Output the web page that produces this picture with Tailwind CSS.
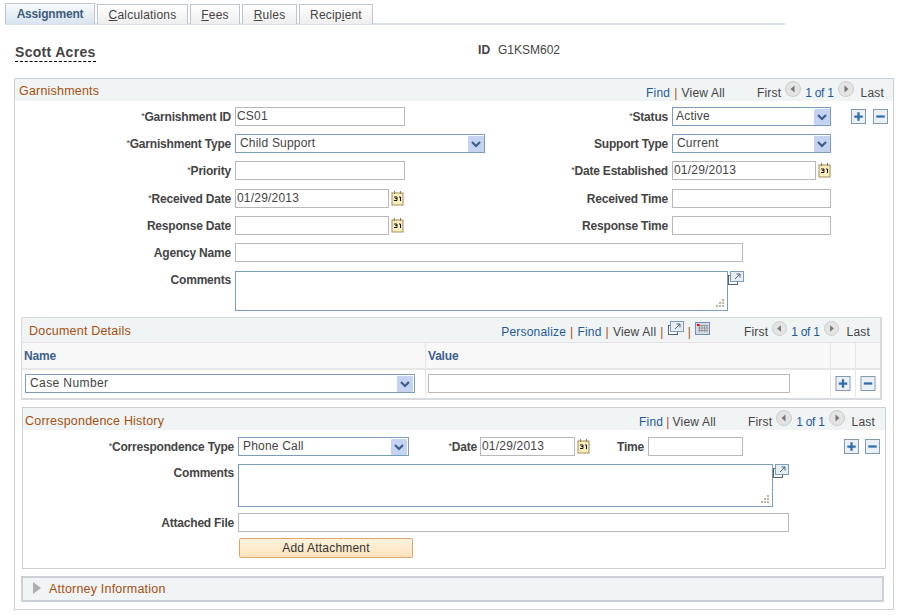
<!DOCTYPE html>
<html lang="en">
<head>
  <meta charset="UTF-8" />
  <title>Assignment</title>
  <script src="https://cdn.jsdelivr.net/npm/@tailwindcss/browser@4"></script>
</head>
<body class="bg-white w-[898px] h-[615px] overflow-hidden font-['Liberation_Sans',Arial,sans-serif] text-[12px] leading-[14px] text-[#444] tracking-[0.2px]">

  <!-- Icon sprites -->
  <svg class="hidden">
    <symbol id="arrow" viewBox="0 0 16 16">
      <rect width="16" height="16" rx="1" fill="#c5d3f2"/>
      <path d="M4 6l4 4 4-4" fill="none" stroke="#3f5c8a" stroke-width="2.2"/>
    </symbol>
    <symbol id="cal" viewBox="0 0 13 15">
      <rect x="1" y="2" width="11" height="12" fill="#fbeebc" stroke="#a48d5c"/>
      <path d="M3.5 0v3M9.5 0v3" stroke="#8d7a50"/>
      <path d="M3 6h3v1.500H4.500h1.500v2H3M8 6h1.500v4" fill="none" stroke="#111" stroke-width="1"/>
    </symbol>
    <symbol id="prev" viewBox="0 0 16 16">
      <circle cx="8" cy="8" r="7.500" fill="#e4e4e4" stroke="#ccc"/>
      <path d="M9.500 4.500v7L5.500 8z" fill="#777"/>
    </symbol>
    <symbol id="next" viewBox="0 0 16 16">
      <circle cx="8" cy="8" r="7.500" fill="#e4e4e4" stroke="#ccc"/>
      <path d="M6.500 4.500v7l4-3.500z" fill="#777"/>
    </symbol>
    <symbol id="plus" viewBox="0 0 16 16">
      <rect x=".5" y=".5" width="15" height="15" fill="#eaf0f5" stroke="#7d95a8"/>
      <path d="M8 3.500v9M3.500 8h9" stroke="#2f6db0" stroke-width="2.400"/>
    </symbol>
    <symbol id="minus" viewBox="0 0 16 16">
      <rect x=".5" y=".5" width="15" height="15" fill="#eaf0f5" stroke="#7d95a8"/>
      <path d="M3.500 8h9" stroke="#2f6db0" stroke-width="2.400"/>
    </symbol>
    <symbol id="popup" viewBox="0 0 16 14">
      <rect x=".5" y="4.500" width="9" height="9" fill="#fff" stroke="#55606c"/>
      <rect x="2.500" y=".5" width="13" height="10" fill="#e6eef5" stroke="#7d9cc0"/>
      <path d="M7 8l5-5M8.500 3H12v3.500" fill="none" stroke="#55606c"/>
    </symbol>
    <symbol id="grip" viewBox="0 0 10 10">
      <path d="M7 1h2v2H7zM4 4h2v2H4zM7 4h2v2H7zM1 7h2v2H1zM4 7h2v2H4zM7 7h2v2H7z" fill="#bcb49c"/>
    </symbol>
  </svg>

  <!-- Tabs -->
  <div class="ml-[5px] mt-[3px] w-[780px] h-[22px] flex gap-[2px] border-b-[2px] border-[#d6e2f0] items-start">
    <div class="w-[90px] h-[21px] border border-b-0 border-[#bcc4cc] bg-gradient-to-b from-[#f8fafc] to-[#d8e4f1] flex items-center justify-center font-bold tracking-[-0.2px] text-[#3f5c7e]">Assignment</div>
    <div class="w-[91px] h-[20px] mt-[1px] border border-b-0 border-[#bcc4cc] bg-gradient-to-b from-white to-[#eee] flex items-center justify-center"><span><u>C</u>alculations</span></div>
    <div class="w-[50px] h-[20px] mt-[1px] border border-b-0 border-[#bcc4cc] bg-gradient-to-b from-white to-[#eee] flex items-center justify-center"><span><u>F</u>ees</span></div>
    <div class="w-[55px] h-[20px] mt-[1px] border border-b-0 border-[#bcc4cc] bg-gradient-to-b from-white to-[#eee] flex items-center justify-center"><span><u>R</u>ules</span></div>
    <div class="w-[74px] h-[20px] mt-[1px] border border-b-0 border-[#bcc4cc] bg-gradient-to-b from-white to-[#eee] flex items-center justify-center"><span>Recip<u>i</u>ent</span></div>
  </div>

  <!-- Employee header -->
  <div class="flex h-[36px] pt-[18px] ml-[15px]">
    <div class="w-[463px]"><span class="inline-block mt-[1px] text-[14px] leading-[16px] font-bold tracking-[0.3px] text-[#444] border-b border-dashed border-black pb-[1px]">Scott Acres</span></div>
    <div class="font-bold w-[20px]">ID</div>
    <div class="tracking-[0px]">G1KSM602</div>
  </div>

  <!-- Garnishments -->
  <div class="ml-[14px] mt-[17px] w-[880px] h-[532px] border border-[#cbd0d6]">
    <div class="h-[22px] bg-[#f0f4f5] flex items-center pl-[4px]">
      <span class="mt-[2px] text-[12.5px] text-[#a8500f]">Garnishments</span>
      <div class="ml-auto mt-[6px] flex items-center mr-[9px]">
        <span class="text-[#1f5a96]">Find</span><span class="mx-[4px] text-[#a8500f]">|</span><span>View All</span>
        <span class="ml-[32px]">First</span>
        <svg class="w-[16px] h-[16px] ml-[4px] -mt-[8px]"><use href="#prev"/></svg>
        <span class="ml-[4px] text-[#1f5a96] tracking-[-0.3px]">1 of 1</span>
        <svg class="w-[16px] h-[16px] ml-[4px] -mt-[8px]"><use href="#next"/></svg>
        <span class="ml-[7px]">Last</span>
      </div>
    </div>

    <div class="pt-[2px]">
      <!-- Row: ID / status -->
      <div class="flex items-center h-[27px]">
        <div class="w-[216px] text-right font-bold tracking-[-0.2px] whitespace-nowrap"><span class="text-[9px] font-normal align-[2px]">*</span>Garnishment ID</div>
        <div class="ml-[4px] w-[170px] h-[19px] border border-[#b8b8b8] px-[1px] leading-[17px]">CS01</div>
        <div class="ml-[94px] w-[169px] text-right font-bold tracking-[-0.2px]"><span class="text-[9px] font-normal align-[2px]">*</span>Status</div>
        <div class="ml-[4px] w-[159px] h-[19px] border border-[#7c9cbc] px-[3px] leading-[17px] flex justify-between items-center">Active<svg class="w-[16px] h-[16px] -mr-[3px]"><use href="#arrow"/></svg></div>
        <svg class="w-[15px] h-[15px] ml-[20px]"><use href="#plus"/></svg>
        <svg class="w-[15px] h-[15px] ml-[7px]"><use href="#minus"/></svg>
      </div>
      <!-- Row: type / support -->
      <div class="flex items-center h-[27px]">
        <div class="w-[216px] text-right font-bold tracking-[-0.2px] whitespace-nowrap"><span class="text-[9px] font-normal align-[2px]">*</span>Garnishment Type</div>
        <div class="ml-[4px] w-[250px] h-[19px] border border-[#7c9cbc] px-[4px] leading-[17px] flex justify-between items-center">Child Support<svg class="w-[16px] h-[16px] -mr-[4px]"><use href="#arrow"/></svg></div>
        <div class="ml-[14px] w-[169px] text-right font-bold tracking-[-0.2px]">Support Type</div>
        <div class="ml-[4px] w-[159px] h-[19px] border border-[#7c9cbc] px-[4px] leading-[17px] flex justify-between items-center">Current<svg class="w-[16px] h-[16px] -mr-[4px]"><use href="#arrow"/></svg></div>
      </div>
      <!-- Row: priority / date established -->
      <div class="flex items-center h-[27px]">
        <div class="w-[216px] text-right font-bold tracking-[-0.2px]"><span class="text-[9px] font-normal align-[2px]">*</span>Priority</div>
        <div class="ml-[4px] w-[170px] h-[19px] border border-[#b8b8b8]"></div>
        <div class="ml-[94px] w-[169px] text-right font-bold tracking-[-0.2px] whitespace-nowrap"><span class="text-[9px] font-normal align-[2px]">*</span>Date Established</div>
        <div class="ml-[4px] w-[144px] h-[19px] border border-[#b8b8b8] px-[1px] leading-[17px]">01/29/2013</div>
        <svg class="w-[13px] h-[15px] ml-[2px]"><use href="#cal"/></svg>
      </div>
      <!-- Row: received -->
      <div class="flex items-center h-[28px] pt-[1px]">
        <div class="w-[216px] text-right font-bold tracking-[-0.2px]"><span class="text-[9px] font-normal align-[2px]">*</span>Received Date</div>
        <div class="ml-[4px] w-[154px] h-[19px] border border-[#b8b8b8] px-[1px] leading-[17px]">01/29/2013</div>
        <svg class="w-[13px] h-[15px] ml-[2px]"><use href="#cal"/></svg>
        <div class="ml-[95px] w-[169px] text-right font-bold tracking-[-0.2px]">Received Time</div>
        <div class="ml-[4px] w-[159px] h-[19px] border border-[#b8b8b8]"></div>
      </div>
      <!-- Row: response -->
      <div class="flex items-center h-[27px]">
        <div class="w-[216px] text-right font-bold tracking-[-0.2px]">Response Date</div>
        <div class="ml-[4px] w-[154px] h-[19px] border border-[#b8b8b8]"></div>
        <svg class="w-[13px] h-[15px] ml-[2px]"><use href="#cal"/></svg>
        <div class="ml-[95px] w-[169px] text-right font-bold tracking-[-0.2px]">Response Time</div>
        <div class="ml-[4px] w-[159px] h-[19px] border border-[#b8b8b8]"></div>
      </div>
      <!-- Row: agency -->
      <div class="flex items-center h-[27px]">
        <div class="w-[216px] text-right font-bold tracking-[-0.2px]">Agency Name</div>
        <div class="ml-[4px] w-[508px] h-[19px] border border-[#b8b8b8]"></div>
      </div>
      <!-- Row: comments -->
      <div class="flex items-start h-[51px] pt-[5px]">
        <div class="w-[216px] text-right font-bold tracking-[-0.2px] pt-[2px]">Comments</div>
        <div class="relative ml-[4px] w-[493px] h-[40px] border border-[#7c9cbc]">
          <svg class="absolute right-[2px] bottom-[2px] w-[10px] h-[10px]"><use href="#grip"/></svg>
        </div>
        <svg class="w-[16px] h-[14px]"><use href="#popup"/></svg>
      </div>
    </div>

    <!-- Document Details -->
    <div class="ml-[6px] w-[861px] h-[83px] border-2 border-[#d8dbde] border-t border-l">
      <div class="h-[25px] bg-[#f0f4f5] border-b border-[#e2e2e2] flex items-center pl-[7px]">
        <span class="mt-[2px] text-[12.5px] text-[#a8500f]">Document Details</span>
        <div class="ml-auto mt-[4px] flex items-center mr-[10px]">
          <span class="text-[#1f5a96]">Personalize</span><span class="mx-[4px] text-[#a8500f]">|</span><span class="text-[#1f5a96]">Find</span><span class="mx-[4px] text-[#a8500f]">|</span><span>View All</span><span class="mx-[4px] text-[#a8500f]">|</span>
          <svg class="w-[16px] h-[14px] -mt-[8px]"><use href="#popup"/></svg><span class="mx-[4px] text-[#a8500f]">|</span>
          <svg class="w-[15px] h-[13px] -mt-[8px]" viewBox="0 0 15 13"><rect x=".5" y=".5" width="14" height="12" fill="#d5d9e2" stroke="#6f8fc5"/><path d="M3 3.500h10M3 6h10M3 8.500h10M4.500 3v7M7 3v7M9.500 3v7M12 3v7" stroke="#8d8d94" stroke-width=".8"/><rect x="2" y="2" width="2.500" height="2" fill="#f00"/></svg>
          <span class="ml-[34px]">First</span>
          <svg class="w-[15px] h-[15px] ml-[4px] -mt-[8px]"><use href="#prev"/></svg>
          <span class="ml-[4px] text-[#1f5a96] tracking-[-0.3px]">1 of 1</span>
          <svg class="w-[15px] h-[15px] ml-[4px] -mt-[8px]"><use href="#next"/></svg>
          <span class="ml-[8px]">Last</span>
        </div>
      </div>
      <div class="h-[27px] flex bg-[#f8f8f8] border-b-2 border-[#e6e6e6] font-bold tracking-[-0.2px] text-[#3c5f8c] items-center">
        <div class="w-[404px] h-full border-r border-[#e6e6e6] pl-[2px] flex items-center">Name</div>
        <div class="w-[405px] h-full border-r border-[#e6e6e6] pl-[2px] flex items-center">Value</div>
        <div class="w-[25px] h-full border-r border-[#e6e6e6]"></div>
      </div>
      <div class="h-[27px] flex items-center">
        <div class="w-[404px] h-full border-r border-[#e6e6e6] pl-[3px] flex items-center">
          <div class="w-[390px] h-[19px] border border-[#7c9cbc] px-[4px] leading-[17px] tracking-[0.4px] flex justify-between items-center">Case Number<svg class="w-[16px] h-[16px] -mr-[3px]"><use href="#arrow"/></svg></div>
        </div>
        <div class="w-[405px] h-full border-r border-[#e6e6e6] pl-[2px] flex items-center">
          <div class="w-[362px] h-[19px] border border-[#b8b8b8]"></div>
        </div>
        <div class="w-[25px] h-full border-r border-[#e6e6e6] flex items-center justify-center"><svg class="w-[16px] h-[15px]"><use href="#plus"/></svg></div>
        <div class="flex-1 h-full flex items-center justify-center"><svg class="w-[16px] h-[15px]"><use href="#minus"/></svg></div>
      </div>
    </div>

    <!-- Correspondence History -->
    <div class="ml-[7px] mt-[7px] w-[864px] h-[162px] border border-[#cbd0d6]">
      <div class="h-[22px] bg-[#f0f4f5] flex items-center pl-[2px]">
        <span class="mt-[3px] text-[12.5px] text-[#a8500f]">Correspondence History</span>
        <div class="ml-auto mt-[6px] flex items-center mr-[10px]">
          <span class="text-[#1f5a96]">Find</span><span class="mx-[3px] text-[#a8500f]">|</span><span>View All</span>
          <span class="ml-[32px]">First</span>
          <svg class="w-[16px] h-[16px] ml-[4px] -mt-[8px]"><use href="#prev"/></svg>
          <span class="ml-[4px] text-[#1f5a96] tracking-[-0.3px]">1 of 1</span>
          <svg class="w-[16px] h-[16px] ml-[4px] -mt-[8px]"><use href="#next"/></svg>
          <span class="ml-[7px]">Last</span>
        </div>
      </div>
      <div class="flex items-center h-[28px] pt-[5px]">
        <div class="w-[211px] text-right font-bold tracking-[-0.2px] whitespace-nowrap"><span class="text-[9px] font-normal align-[2px]">*</span>Correspondence Type</div>
        <div class="ml-[4px] w-[171px] h-[19px] border border-[#7c9cbc] px-[4px] leading-[17px] flex justify-between items-center">Phone Call<svg class="w-[16px] h-[16px] -mr-[3px]"><use href="#arrow"/></svg></div>
        <div class="ml-[9px] w-[59px] text-right font-bold tracking-[-0.2px]"><span class="text-[9px] font-normal align-[2px]">*</span>Date</div>
        <div class="ml-[3px] w-[95px] h-[19px] border border-[#b8b8b8] px-[1px] leading-[17px]">01/29/2013</div>
        <svg class="w-[13px] h-[15px] ml-[2px]"><use href="#cal"/></svg>
        <div class="ml-[27px] w-[27px] font-bold tracking-[-0.2px]">Time</div>
        <div class="ml-[4px] w-[95px] h-[19px] border border-[#b8b8b8]"></div>
        <svg class="w-[15px] h-[15px] ml-[101px]"><use href="#plus"/></svg>
        <svg class="w-[15px] h-[15px] ml-[6px]"><use href="#minus"/></svg>
      </div>
      <div class="flex items-start h-[49px] pt-[6px]">
        <div class="w-[211px] text-right font-bold tracking-[-0.2px] pt-[2px]">Comments</div>
        <div class="relative ml-[4px] w-[535px] h-[43px] border border-[#7c9cbc]">
          <svg class="absolute right-[2px] bottom-[2px] w-[10px] h-[10px]"><use href="#grip"/></svg>
        </div>
        <svg class="w-[16px] h-[14px]"><use href="#popup"/></svg>
      </div>
      <div class="flex items-center h-[27px] pt-[4px]">
        <div class="w-[211px] text-right font-bold tracking-[-0.2px]">Attached File</div>
        <div class="ml-[4px] w-[551px] h-[19px] border border-[#b8b8b8]"></div>
      </div>
      <div class="ml-[216px] mt-[4px] w-[174px] h-[20px] border border-[#dca66c] rounded-[2px] bg-gradient-to-b from-[#fdf3de] to-[#fbe3bb] text-center leading-[19px] text-[#333]">Add Attachment</div>
    </div>

    <!-- Attorney Information -->
    <div class="ml-[6px] mt-[7px] w-[863px] h-[26px] bg-[#f0f4f5] border-2 border-[#cbd0d6] flex items-center">
      <svg class="w-[8px] h-[12px] ml-[10px] -mt-[3px]" viewBox="0 0 8 12"><path d="M0 0l8 6-8 6z" fill="#b0b0b0"/></svg>
      <span class="ml-[8px] text-[12.5px] text-[#a8500f]">Attorney Information</span>
    </div>
  </div>
</body>
</html>
